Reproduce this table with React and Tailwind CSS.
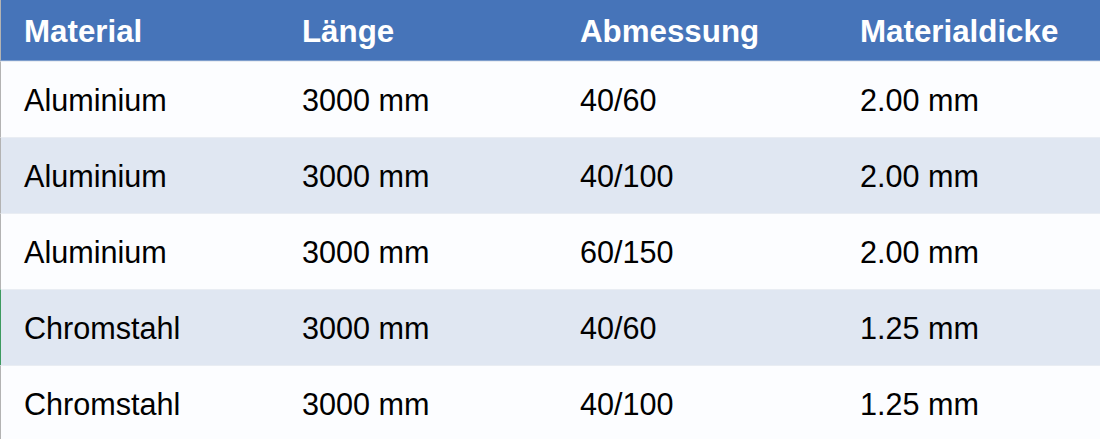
const rows = [
  ['Aluminium', '3000 mm', '40/60', '2.00 mm'],
  ['Aluminium', '3000 mm', '40/100', '2.00 mm'],
  ['Aluminium', '3000 mm', '60/150', '2.00 mm'],
  ['Chromstahl', '3000 mm', '40/60', '1.25 mm'],
  ['Chromstahl', '3000 mm', '40/100', '1.25 mm'],
];

const cols = 'grid grid-cols-[278px_278px_280px_1fr]';

export default function App() {
  return (
    <div className="w-[1100px] h-[439px] overflow-hidden bg-white font-['Liberation_Sans',Arial,sans-serif]">
      <div className={`${cols} h-[61px] items-center bg-[#4674b9] border-l border-l-[#b3b3b3] border-b border-b-[#7d9dcc] text-white text-[31.3px] font-bold`}>
        <div className="pl-[23px] pt-[4px]">Material</div>
        <div className="pl-[23px] pt-[4px]">Länge</div>
        <div className="pl-[23px] pt-[4px]">Abmessung</div>
        <div className="pl-[23px] pt-[4px]">Materialdicke</div>
      </div>
      {rows.map((r, i) => (
        <div
          key={i}
          className={`${cols} h-[76px] items-center text-[30.6px] text-black border-t border-t-[#e9edf3] border-l ${
            i === 3 ? 'border-l-[#3c9a5f]' : 'border-l-[#b3b3b3]'
          } ${i % 2 ? 'bg-[#e0e7f2]' : 'bg-[#fcfdff]'}`}
        >
          {r.map((c, j) => (
            <div key={j} className="pl-[23px] pt-[3px] whitespace-nowrap">
              {c}
            </div>
          ))}
        </div>
      ))}
    </div>
  );
}
